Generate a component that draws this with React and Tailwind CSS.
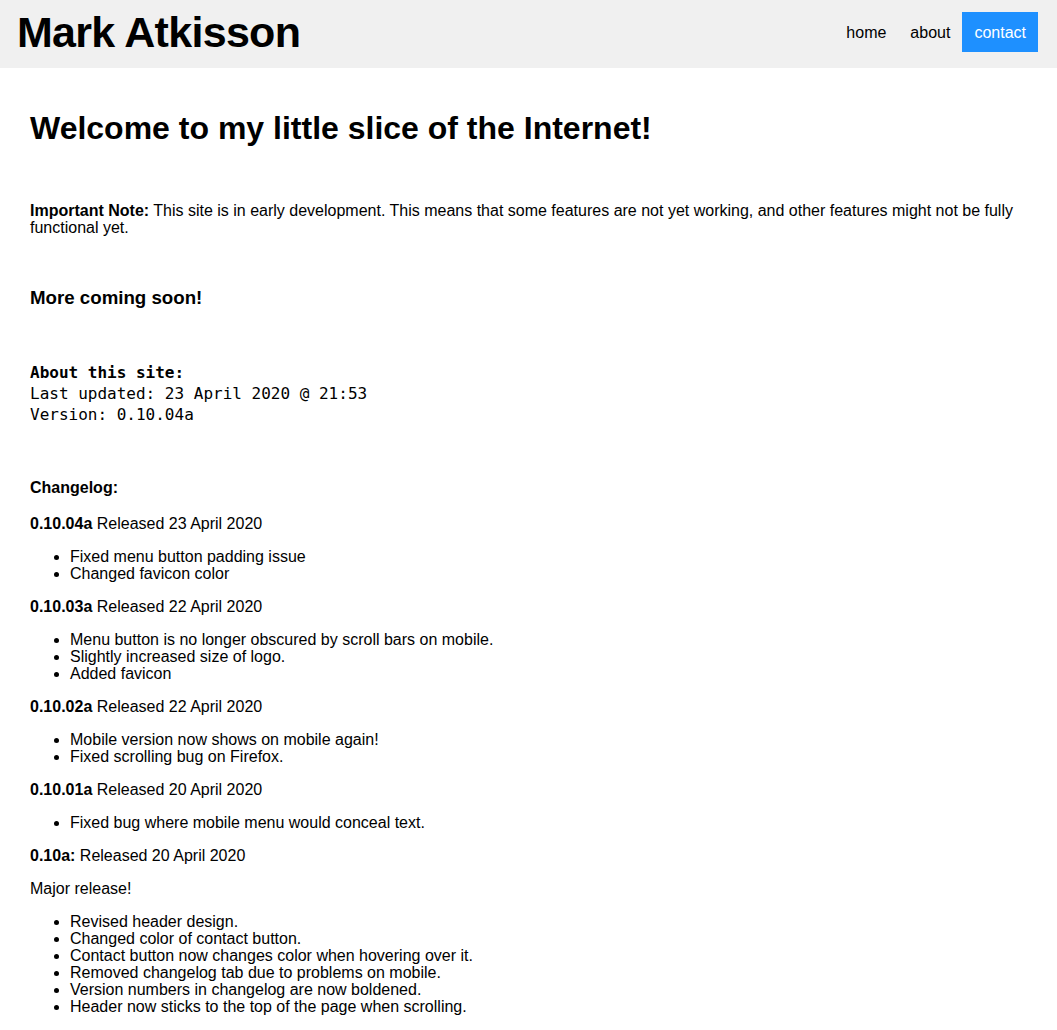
const releases = [
  {
    version: '0.10.04a',
    date: 'Released 23 April 2020',
    items: ['Fixed menu button padding issue', 'Changed favicon color'],
  },
  {
    version: '0.10.03a',
    date: 'Released 22 April 2020',
    items: [
      'Menu button is no longer obscured by scroll bars on mobile.',
      'Slightly increased size of logo.',
      'Added favicon',
    ],
  },
  {
    version: '0.10.02a',
    date: 'Released 22 April 2020',
    items: ['Mobile version now shows on mobile again!', 'Fixed scrolling bug on Firefox.'],
  },
  {
    version: '0.10.01a',
    date: 'Released 20 April 2020',
    items: ['Fixed bug where mobile menu would conceal text.'],
  },
];

const majorItems = [
  'Revised header design.',
  'Changed color of contact button.',
  'Contact button now changes color when hovering over it.',
  'Removed changelog tab due to problems on mobile.',
  'Version numbers in changelog are now boldened.',
  'Header now sticks to the top of the page when scrolling.',
];

export default function App() {
  return (
    <div className="min-h-screen bg-white text-black font-['Liberation_Sans',Arial,sans-serif]">
      <header className="h-[68px] bg-[#f0f0f0] flex items-center justify-between pl-[17px] pr-[19px] pb-[4px]">
        <span className="text-[43px] leading-[50px] font-bold tracking-[-0.7px]">Mark Atkisson</span>
        <nav className="flex items-center text-[16px] leading-[17px]">
          <a href="#" className="px-3 py-[11px]">home</a>
          <a href="#" className="px-3 py-[11px]">about</a>
          <a href="#" className="px-3 py-[11.5px] bg-[#1e90ff] text-white">contact</a>
        </nav>
      </header>

      <main className="px-[30px] pb-4 text-[16px] leading-[17px]">
        <h1 className="mt-[42px] text-[32px] leading-[36px] font-bold">
          Welcome to my little slice of the Internet!
        </h1>

        <p className="mt-[56px]">
          <b>Important Note:</b> This site is in early development. This means that some features are not
          yet working, and other features might not be fully functional yet.
        </p>

        <h3 className="mt-[52px] text-[18.7px] leading-[20px] font-bold">More coming soon!</h3>

        <div className="mt-[54px] font-['DejaVu_Sans_Mono',monospace] text-[16px] leading-[21px]">
          <b>About this site:</b>
          <br />
          Last updated: 23 April 2020 @ 21:53
          <br />
          Version: 0.10.04a
        </div>

        <h4 className="mt-[54px] font-bold">Changelog:</h4>

        {releases.map((r, i) => (
          <div key={r.version} className={i === 0 ? 'mt-[19px]' : 'mt-4'}>
            <p>
              <b>{r.version}</b> {r.date}
            </p>
            <ul className="mt-4 list-disc pl-[40px]">
              {r.items.map((item) => (
                <li key={item}>{item}</li>
              ))}
            </ul>
          </div>
        ))}

        <p className="mt-4">
          <b>0.10a:</b> Released 20 April 2020
        </p>
        <p className="mt-4">Major release!</p>
        <ul className="mt-4 list-disc pl-[40px]">
          {majorItems.map((item) => (
            <li key={item}>{item}</li>
          ))}
        </ul>
      </main>
    </div>
  );
}
